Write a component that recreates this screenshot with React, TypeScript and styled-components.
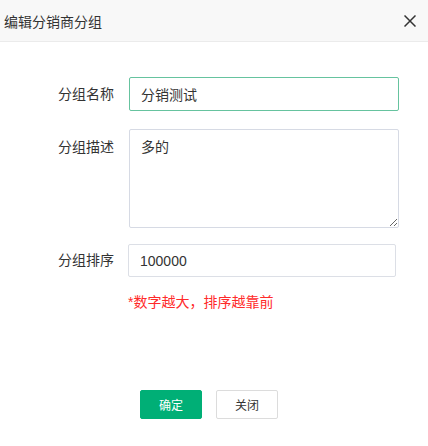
// 编辑分销商分组
import * as React from 'react';
import styled, { createGlobalStyle } from 'styled-components';

const GlobalStyle = createGlobalStyle`
    html, body {
        margin: 0;
        padding: 0;
        background: #fff;
    }
    body {
        font-family: "Liberation Sans", "Noto Sans CJK SC", sans-serif;
        color: #333;
    }
    * {
        box-sizing: border-box;
    }
`

const Dialog = styled.div`
    width: 428px;
    height: 446px;
    display: flex;
    flex-direction: column;
    background: #fff;
`

const Header = styled.header`
    height: 42px;
    flex-shrink: 0;
    display: flex;
    align-items: center;
    justify-content: space-between;
    padding: 0 12px 0 4px;
    background: #f8f8f8;
    border-bottom: 1px solid #ebebeb;
`

const Title = styled.h2`
    margin: 0;
    font-size: 14px;
    font-weight: normal;
    color: #333;
`

const CloseButton = styled.button`
    width: 12px;
    height: 12px;
    padding: 0;
    border: none;
    background: none;
    cursor: pointer;
    display: flex;
`

const Form = styled.form`
    flex: 1;
    display: flex;
    flex-direction: column;
    padding-top: 35px;
`

const Row = styled.div<{ $gap: number }>`
    display: flex;
    align-items: flex-start;
    margin-bottom: ${p => p.$gap}px;
`

const Label = styled.label<{ $top: number }>`
    width: 114px;
    flex-shrink: 0;
    padding-top: ${p => p.$top}px;
    padding-right: 0;
    text-align: right;
    font-size: 14px;
    line-height: 20px;
    color: #333;
`

const TextInput = styled.input<{ $focus?: boolean; $left: number; $width: number }>`
    margin-left: ${p => p.$left}px;
    width: ${p => p.$width}px;
    height: ${p => p.$focus ? 34 : 33}px;
    padding: 0 11px;
    border: 1px solid ${p => p.$focus ? '#66c39f' : '#dcdfe6'};
    border-radius: 2px;
    outline: none;
    font-family: "Liberation Sans", "Noto Sans CJK SC", sans-serif;
    font-size: 14px;
    color: #333;
    background: #fff;
`

const TextArea = styled.textarea`
    margin-left: 15px;
    width: 270px;
    height: 99px;
    padding: 7px 11px;
    border: 1px solid #d6dae4;
    border-radius: 2px;
    outline: none;
    font-family: "Liberation Sans", "Noto Sans CJK SC", sans-serif;
    font-size: 14px;
    line-height: 20px;
    color: #333;
    resize: vertical;
`

const Hint = styled.p`
    margin: 0 0 0 128px;
    font-size: 14px;
    line-height: 20px;
    color: #ff2a2a;
`

const Footer = styled.div`
    display: flex;
    gap: 14px;
    padding-left: 140px;
    margin-top: auto;
    margin-bottom: 27px;
`

const Button = styled.button<{ $primary?: boolean }>`
    width: 62px;
    height: 29px;
    padding: 0;
    border-radius: 2px;
    border: 1px solid ${p => p.$primary ? '#00af76' : '#dcdcdc'};
    background: ${p => p.$primary ? '#00af76' : '#fff'};
    color: ${p => p.$primary ? '#fff' : '#333'};
    font-family: "Liberation Sans", "Noto Sans CJK SC", sans-serif;
    font-size: 12px;
    cursor: pointer;
`

export default function App() {
    const [name, setName] = React.useState('分销测试');
    const [desc, setDesc] = React.useState('多的');
    const [sort, setSort] = React.useState('100000');
    return (
        <>
            <GlobalStyle />
            <Dialog>
                <Header>
                    <Title>编辑分销商分组</Title>
                    <CloseButton aria-label="关闭">
                        <svg width="12" height="12" viewBox="0 0 12 12">
                            <path d="M0.5 0.5 L11.5 11.5 M11.5 0.5 L0.5 11.5" stroke="#333" strokeWidth="1.5" />
                        </svg>
                    </CloseButton>
                </Header>
                <Form onSubmit={e => e.preventDefault()}>
                    <Row $gap={18}>
                        <Label $top={7}>分组名称</Label>
                        <TextInput $focus $left={15} $width={270} value={name} onChange={e => setName(e.target.value)} />
                    </Row>
                    <Row $gap={16}>
                        <Label $top={8}>分组描述</Label>
                        <TextArea value={desc} onChange={e => setDesc(e.target.value)} />
                    </Row>
                    <Row $gap={15}>
                        <Label $top={6}>分组排序</Label>
                        <TextInput $left={14} $width={268} value={sort} onChange={e => setSort(e.target.value)} />
                    </Row>
                    <Hint>*数字越大，排序越靠前</Hint>
                    <Footer>
                        <Button $primary type="submit">确定</Button>
                        <Button type="button">关闭</Button>
                    </Footer>
                </Form>
            </Dialog>
        </>
    )
}
